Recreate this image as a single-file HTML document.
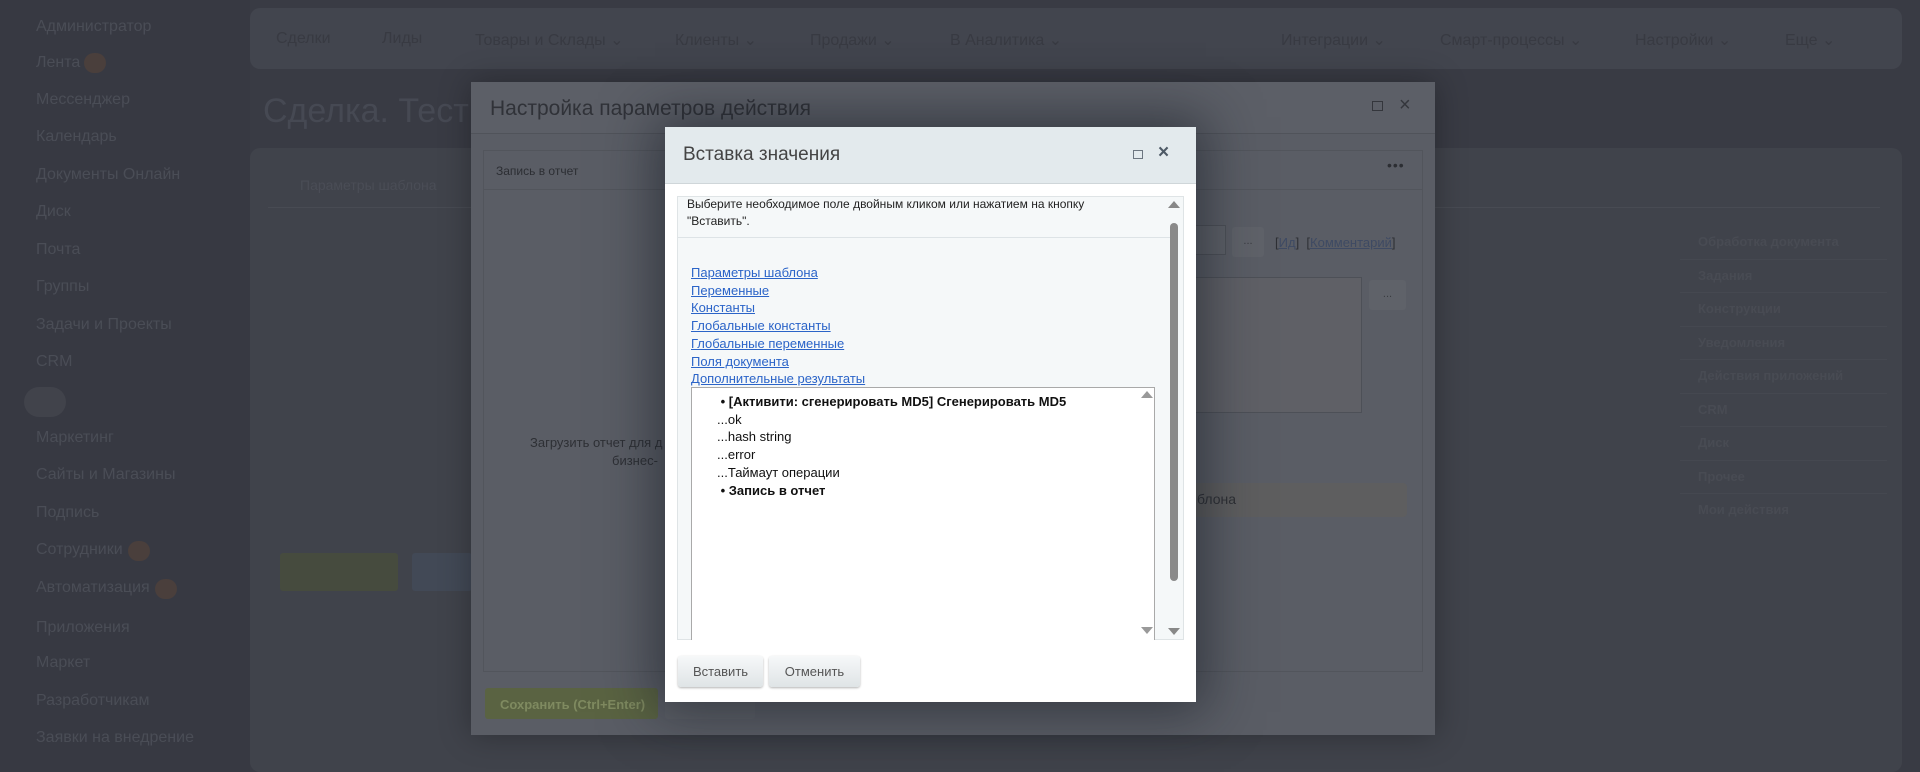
<!DOCTYPE html>
<html><head><meta charset="utf-8"><style>
*{margin:0;padding:0;box-sizing:border-box}
body{width:1920px;height:772px;overflow:hidden;background:#393b44;font-family:"Liberation Sans","DejaVu Sans",sans-serif;position:relative}
.a{position:absolute;white-space:nowrap}
.side{color:#4a4d56;font-size:16px}
.nav{color:#383a42;font-size:16px;top:30px}
</style></head><body>
<div class="a" style="left:0;top:0;width:250px;height:772px;background:#373942"></div>
<div class="a side" style="left:36px;top:18px">Администратор</div>
<div class="a side" style="left:36px;top:54px">Лента</div>
<div class="a" style="left:84px;top:53px;width:22px;height:20px;border-radius:10px;background:#4a3f3c"></div>
<div class="a side" style="left:36px;top:91px">Мессенджер</div>
<div class="a side" style="left:36px;top:128px">Календарь</div>
<div class="a side" style="left:36px;top:166px">Документы Онлайн</div>
<div class="a side" style="left:36px;top:203px">Диск</div>
<div class="a side" style="left:36px;top:241px">Почта</div>
<div class="a side" style="left:36px;top:278px">Группы</div>
<div class="a side" style="left:36px;top:316px">Задачи и Проекты</div>
<div class="a side" style="left:36px;top:353px">CRM</div>
<div class="a" style="left:24px;top:387px;width:42px;height:30px;border-radius:15px;background:#41434b"></div>
<div class="a side" style="left:36px;top:429px">Маркетинг</div>
<div class="a side" style="left:36px;top:466px">Сайты и Магазины</div>
<div class="a side" style="left:36px;top:504px">Подпись</div>
<div class="a side" style="left:36px;top:541px">Сотрудники</div>
<div class="a" style="left:128px;top:541px;width:22px;height:20px;border-radius:10px;background:#4a3f3c"></div>
<div class="a side" style="left:36px;top:579px">Автоматизация</div>
<div class="a" style="left:155px;top:579px;width:22px;height:20px;border-radius:10px;background:#4a3f3c"></div>
<div class="a side" style="left:36px;top:619px">Приложения</div>
<div class="a side" style="left:36px;top:654px">Маркет</div>
<div class="a side" style="left:36px;top:692px">Разработчикам</div>
<div class="a side" style="left:36px;top:729px">Заявки на внедрение</div>

<div class="a" style="left:250px;top:8px;width:1652px;height:61px;border-radius:10px;background:#42454e"></div>
<div class="a nav" style="left:276px">Сделки</div>
<div class="a nav" style="left:382px">Лиды</div>
<div class="a nav" style="left:475px">Товары и Склады ⌄</div>
<div class="a nav" style="left:675px">Клиенты ⌄</div>
<div class="a nav" style="left:810px">Продажи ⌄</div>
<div class="a nav" style="left:950px">В Аналитика ⌄</div>
<div class="a nav" style="left:1281px">Интеграции ⌄</div>
<div class="a nav" style="left:1440px">Смарт-процессы ⌄</div>
<div class="a nav" style="left:1635px">Настройки ⌄</div>
<div class="a nav" style="left:1785px">Еще ⌄</div>
<div class="a" style="left:263px;top:92px;font-size:34px;color:#464953">Сделка. Тест БП -</div>
<div class="a" style="left:250px;top:148px;width:1652px;height:624px;border-radius:10px;background:#40434b"></div>
<div class="a" style="left:268px;top:168px;width:1612px;height:40px;border-bottom:1px solid #484b53"></div>
<div class="a" style="left:300px;top:177px;font-size:14px;color:#4a4d56">Параметры шаблона</div>
<div class="a" style="left:280px;top:553px;width:118px;height:38px;background:#464b3e;border-radius:3px"></div>
<div class="a" style="left:412px;top:553px;width:60px;height:38px;background:#424956;border-radius:3px"></div>
<div class="a" style="left:1680px;top:226px;width:207px;height:254px">
<div style="height:33.5px;border-bottom:1px solid #454850;color:#484b53;font-size:13px;font-weight:bold;padding:8px 0 0 18px">Обработка документа</div>
<div style="height:33.5px;border-bottom:1px solid #454850;color:#484b53;font-size:13px;font-weight:bold;padding:8px 0 0 18px">Задания</div>
<div style="height:33.5px;border-bottom:1px solid #454850;color:#484b53;font-size:13px;font-weight:bold;padding:8px 0 0 18px">Конструкции</div>
<div style="height:33.5px;border-bottom:1px solid #454850;color:#484b53;font-size:13px;font-weight:bold;padding:8px 0 0 18px">Уведомления</div>
<div style="height:33.5px;border-bottom:1px solid #454850;color:#484b53;font-size:13px;font-weight:bold;padding:8px 0 0 18px">Действия приложений</div>
<div style="height:33.5px;border-bottom:1px solid #454850;color:#484b53;font-size:13px;font-weight:bold;padding:8px 0 0 18px">CRM</div>
<div style="height:33.5px;border-bottom:1px solid #454850;color:#484b53;font-size:13px;font-weight:bold;padding:8px 0 0 18px">Диск</div>
<div style="height:33.5px;border-bottom:1px solid #454850;color:#484b53;font-size:13px;font-weight:bold;padding:8px 0 0 18px">Прочее</div>
<div style="height:33.5px;color:#484b53;font-size:13px;font-weight:bold;padding:8px 0 0 18px">Мои действия</div>
</div>

<!-- big dialog -->
<div class="a" style="left:471px;top:82px;width:964px;height:653px;background:#5a5d65;box-shadow:0 0 30px rgba(0,0,0,.3)"></div>
<div class="a" style="left:471px;top:82px;width:964px;height:52px;background:#5c5f67;border-bottom:1px solid #50535a"></div>
<div class="a" style="left:490px;top:97px;font-size:21px;color:#303238">Настройка параметров действия</div>
<div class="a" style="left:1372px;top:101px;width:11px;height:10px;border:1px solid #34363c"></div>
<div class="a" style="left:1399px;top:94px;font-size:20px;color:#34363c">×</div>
<div class="a" style="left:483px;top:150px;width:940px;height:522px;border:1px solid #52555c"></div>
<div class="a" style="left:483px;top:150px;width:940px;height:40px;border-bottom:1px solid #52555c"></div>
<div class="a" style="left:496px;top:164px;font-size:12px;color:#2c2e33">Запись в отчет</div>
<div class="a" style="left:1387px;top:157px;font-size:14px;color:#2c2e33;letter-spacing:1px">•••</div>
<div class="a" style="left:530px;top:435px;font-size:13px;color:#2e3035">Загрузить отчет для д</div>
<div class="a" style="left:612px;top:453px;font-size:13px;color:#2e3035">бизнес-</div>
<div class="a" style="left:1160px;top:225px;width:66px;height:30px;border:1px solid #4d5057;background:#5e6168"></div>
<div class="a" style="left:1232px;top:227px;width:32px;height:30px;border-radius:3px;background:#5f6269;color:#3a3c41;font-size:11px;text-align:center;line-height:28px">...</div>
<div class="a" style="left:1275px;top:235px;font-size:13px;color:#2e3035">[<u style="color:#3e4a63">Ид</u>] &nbsp;[<u style="color:#3e4a63">Комментарий</u>]</div>
<div class="a" style="left:1160px;top:277px;width:202px;height:136px;border:1px solid #4d5057;background:#5f6066"></div>
<div class="a" style="left:1369px;top:280px;width:37px;height:30px;border-radius:3px;background:#5f6269;color:#3a3c41;font-size:11px;text-align:center;line-height:28px">...</div>
<div class="a" style="left:1160px;top:483px;width:247px;height:34px;border-radius:4px;background:#5e5e5f"></div>
<div class="a" style="left:1197px;top:491px;font-size:14px;color:#2e3035">блона</div>
<div class="a" style="left:485px;top:688px;width:173px;height:31px;border-radius:3px;background:#5a6342"></div>
<div class="a" style="left:500px;top:697px;font-size:13px;font-weight:bold;color:#7f8a60">Сохранить (Ctrl+Enter)</div>
<div class="a" style="left:665px;top:688px;width:90px;height:31px;border-radius:3px;background:#5d6067"></div>

<!-- small dialog -->
<div class="a" style="left:665px;top:127px;width:531px;height:575px;background:#fff;box-shadow:0 0 50px 10px rgba(20,25,35,.55)"></div>
<div class="a" style="left:665px;top:127px;width:531px;height:57px;background:#e3eaed;border-bottom:1px solid #cfd6d9"></div>
<div class="a" style="left:683px;top:144px;font-size:19px;color:#444">Вставка значения</div>
<div class="a" style="left:1133px;top:150px;width:10px;height:9px;border:1px solid #6c7680"></div>
<div class="a" style="left:1158px;top:142px;font-size:19px;color:#4e5a66;font-weight:bold">×</div>
<div class="a" style="left:677px;top:196px;width:507px;height:444px;background:#f5f8f9;border:1px solid #dfe4e6"></div>
<div class="a" style="left:678px;top:237px;width:492px;height:1px;background:#dde3e6"></div>
<div class="a" style="left:687px;top:196px;font-size:12px;color:#222;line-height:17px">Выберите необходимое поле двойным кликом или нажатием на кнопку<br>"Вставить".</div>
<div class="a" style="left:691px;top:264px;font-size:13px;line-height:17.7px;color:#2b64c8;text-decoration:underline">
<div>Параметры шаблона</div><div>Переменные</div><div>Константы</div><div>Глобальные константы</div><div>Глобальные переменные</div><div>Поля документа</div><div>Дополнительные результаты</div></div>
<div class="a" style="left:1168px;top:201px;width:0;height:0;border:6px solid transparent;border-bottom:7px solid #888;border-top:0"></div>
<div class="a" style="left:1170px;top:223px;width:8px;height:358px;border-radius:4px;background:#8a8a8a"></div>
<div class="a" style="left:1168px;top:628px;width:0;height:0;border:6px solid transparent;border-top:7px solid #888;border-bottom:0"></div>
<div class="a" style="left:691px;top:387px;width:464px;height:253px;background:#fff;border:1px solid #a9a9a9;border-bottom:none"></div>
<div class="a" style="left:1141px;top:391px;width:0;height:0;border:6px solid transparent;border-bottom:7px solid #999;border-top:0"></div>
<div class="a" style="left:1141px;top:627px;width:0;height:0;border:6px solid transparent;border-top:7px solid #999;border-bottom:0"></div>
<div class="a" style="left:717px;top:393px;font-size:13px;line-height:17.7px;color:#111">
<div style="font-weight:bold">&nbsp;• [Активити: сгенерировать MD5] Сгенерировать MD5</div>
<div>...ok</div><div>...hash string</div><div>...error</div><div>...Таймаут операции</div>
<div style="font-weight:bold">&nbsp;• Запись в отчет</div></div>
<div class="a" style="left:678px;top:656px;width:85px;height:31px;border-radius:3px;background:linear-gradient(#f6f8f9,#dfe4e6);box-shadow:0 1px 2px rgba(0,0,0,.3);font-size:13px;color:#555;text-align:center;line-height:31px">Вставить</div>
<div class="a" style="left:769px;top:656px;width:91px;height:31px;border-radius:3px;background:linear-gradient(#f6f8f9,#dfe4e6);box-shadow:0 1px 2px rgba(0,0,0,.3);font-size:13px;color:#555;text-align:center;line-height:31px">Отменить</div>
</body></html>
